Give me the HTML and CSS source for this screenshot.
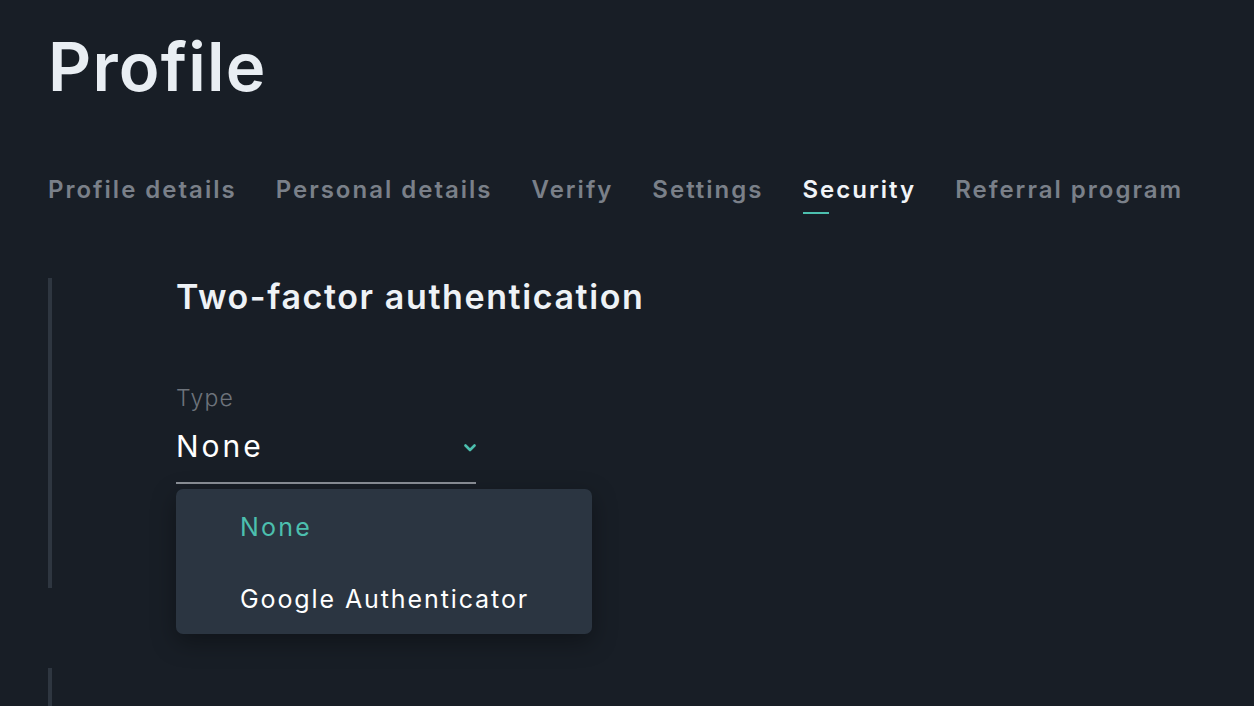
FILE: index.html
```html
<!DOCTYPE html>
<html lang="en">
<head>
<meta charset="utf-8">
<title>Profile</title>
<link rel="stylesheet" href="styles.css">
</head>
<body>
<main class="page">
  <h1 class="title">Profile</h1>
  <nav class="tabs">
    <a class="tab">Profile details</a>
    <a class="tab">Personal details</a>
    <a class="tab">Verify</a>
    <a class="tab">Settings</a>
    <a class="tab active">Security</a>
    <a class="tab">Referral program</a>
  </nav>
  <section class="block">
    <h2 class="block-title">Two-factor authentication</h2>
    <div class="field">
      <div class="label">Type</div>
      <div class="select">
        <span class="value">None</span>
        <svg class="chev" width="12" height="8" viewBox="0 0 12 8"><path d="M1.5 1.5 L6 6 L10.5 1.5" fill="none" stroke="#4cbfae" stroke-width="2.6" stroke-linecap="round" stroke-linejoin="round"/></svg>
      </div>
      <ul class="menu">
        <li class="option selected">None</li>
        <li class="option">Google Authenticator</li>
      </ul>
    </div>
  </section>
  <section class="block next"></section>
</main>
</body>
</html>
```

FILE: styles.css
```css
* { box-sizing: border-box; }
html, body {
  margin: 0;
  padding: 0;
  background: #181e26;
  overflow: hidden;
}
body {
  font-family: Inter, "Liberation Sans", sans-serif;
  color: #eef2f6;
}
.page {
  padding: 0 48px;
}
.title {
  margin: 27px 0 0;
  font-size: 67px;
  line-height: 80px;
  font-weight: 600;
  color: #e9eef3;
  letter-spacing: 1.2px;
}
.tabs {
  display: flex;
  gap: 39px;
  margin-top: 68px;
}
.tab {
  position: relative;
  font-size: 24px;
  line-height: 30px;
  font-weight: 600;
  letter-spacing: 2px;
  color: #7a8089;
  white-space: nowrap;
}
.tab.active {
  color: #f1f4f8;
}
.tab.active::after {
  content: "";
  position: absolute;
  left: 1px;
  top: 37px;
  width: 26px;
  height: 2px;
  background: #4cbfae;
}
.block {
  margin-top: 73px;
  border-left: 4px solid #2e3640;
  padding: 0 0 104px 124px;
}
.block-title {
  margin: 0;
  font-size: 34px;
  line-height: 38px;
  font-weight: 600;
  letter-spacing: 1.6px;
  color: #eef2f6;
}
.field {
  position: relative;
  margin-top: 68px;
  width: 300px;
}
.label {
  font-size: 23px;
  line-height: 28px;
  font-weight: 300;
  letter-spacing: 1.2px;
  color: #6d737b;
}
.select {
  display: flex;
  align-items: center;
  justify-content: space-between;
  margin-top: 16px;
  padding-bottom: 18px;
  border-bottom: 2px solid #8b9097;
}
.value {
  font-size: 30px;
  line-height: 36px;
  font-weight: 400;
  letter-spacing: 3px;
  color: #ffffff;
}
.chev {
  margin-top: 3px;
}
.menu {
  position: absolute;
  left: 0;
  top: 105px;
  width: 416px;
  margin: 0;
  padding: 2px 0 0;
  list-style: none;
  background: #2b3541;
  border-radius: 7px;
  box-shadow: 0 8px 24px rgba(0, 0, 0, 0.35);
}
.option {
  padding: 18px 0 18px 64px;
  font-size: 25px;
  line-height: 36px;
  font-weight: 400;
  letter-spacing: 1.9px;
  color: #ffffff;
}
.option + .option {
  padding-bottom: 17px;
}
.option.selected {
  color: #4cbfae;
  letter-spacing: 2.2px;
}
.block.next {
  margin-top: 80px;
  height: 200px;
  padding: 0;
}
```
